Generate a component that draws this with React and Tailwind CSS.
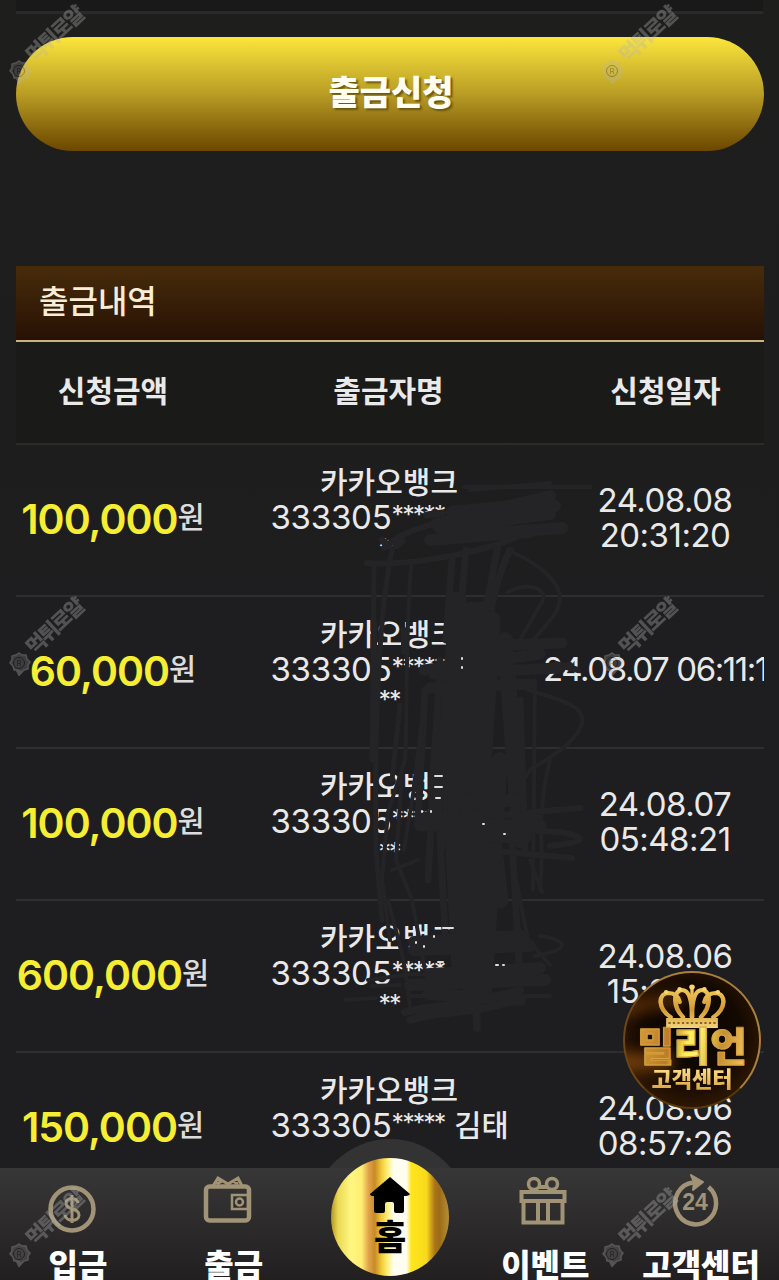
import clsx from 'clsx';

const transactions = [
  { amount: '100,000', stars: '*****', tail: '**', name: '', date: ['24.08.08', '20:31:20'] },
  { amount: '60,000', stars: '*****', tail: '**', name: '', date: ['24.08.07 06:11:1'] },
  { amount: '100,000', stars: '*****', tail: '**', name: '', date: ['24.08.07', '05:48:21'] },
  { amount: '600,000', stars: '*****', tail: '**', name: '', date: ['24.08.06', '15:20:11'] },
  { amount: '150,000', stars: '*****', tail: '', name: '김태', date: ['24.08.06', '08:57:26'] },
];

const watermarks = [
  'left-0 top-0',
  'left-[593px] top-0',
  'left-0 top-[592px]',
  'left-[593px] top-[592px]',
  'left-0 top-[1183px]',
  'left-[593px] top-[1183px]',
];

function Watermark({ className }) {
  return (
    <div className={clsx('absolute h-[92px] w-[92px] text-[#b5b5b5] opacity-35', className)}>
      <svg className="absolute left-[7px] top-[59px]" width="25" height="26" viewBox="0 0 25 26" fill="none" stroke="currentColor">
        <path d="M12 2l3 2 4 0 1 4 3 3-2 3 0 4-4 1-3 3-3-3-4 0-1-4-3-3 2-3 0-4 4-1z" fill="currentColor" fillOpacity=".6" strokeWidth="1.5" />
        <circle cx="12" cy="12" r="5.5" stroke="#222" strokeWidth="1" />
        <path d="M9 19l3 6 4-5" fill="currentColor" />
        <text x="9.500" y="15" fontSize="8" fill="#222" stroke="none" fontFamily="Inter, sans-serif">R</text>
      </svg>
      <span className="absolute left-[14px] top-[23px] w-[82px] -rotate-43 text-center text-[21px] font-black leading-[24px] tracking-[-2px] whitespace-nowrap">
        먹튀로얄
      </span>
    </div>
  );
}

function TransactionRow({ item }) {
  return (
    <div className="grid h-[152px] grid-cols-[194px_1fr_194px] items-center border-b-2 border-[#2e2d2f] pb-[5px]">
      <div className="mt-[3px] flex items-center justify-center whitespace-nowrap">
        <span className="text-[41px] font-semibold leading-none tracking-[-1px] text-[#f6ee32]">{item.amount}</span>
        <span className="-mt-[3px] text-[29.5px] font-medium leading-none text-[#dcdcdc]">원</span>
      </div>
      <div className="mr-[2px] text-center text-[33px] leading-[35px]">
        <p className="h-[35px] text-[30px] font-medium">카카오뱅크</p>
        <p className="ml-[1px] flex h-[35px] justify-center whitespace-nowrap">
          <span className="tracking-[-0.2px]">333305</span>
          <span className="w-[57px] text-left text-[25px] leading-[31px] tracking-[-2px]">{item.stars}</span>
          <span className="w-[60px] text-right text-[29.5px] font-medium leading-[34px]">{item.name}</span>
        </p>
        <p className="h-[35px] text-[25px] leading-[26px] tracking-[-2px]">{item.tail}</p>
      </div>
      <div className="mr-[4px] flex flex-col items-center text-[33px] leading-[35px] tracking-[-0.5px]">
        {item.date.map((line) => (
          <p key={line} className={clsx('whitespace-nowrap', item.date.length === 1 && 'ml-[-20px] tracking-[-1.4px]')}>{line}</p>
        ))}
      </div>
    </div>
  );
}

// Marker strokes hiding the account details
function Scribble() {
  return (
    <svg className="pointer-events-none absolute left-0 top-0" width="779" height="1280" fill="none" stroke="#242326" strokeLinecap="round" strokeLinejoin="round">
      <path d="M436 524L550 496M452 512L550 502M440 528L550 514M446 536L562 528M430 540L530 532M455 520L555 506" strokeWidth="12" />
      <path d="M464 487L590 487M470 490L550 483" strokeWidth="4" />
      <path d="M367 563C400 566 470 556 515 538M384 548C400 532 430 524 446 522M384 548L400 536" strokeWidth="6" />
      <path d="M374 566L372 760M392 550C380 610 374 700 376 850L382 920" strokeWidth="5" />
      <path d="M411 566C405 640 408 700 405 760L388 812L382 880L390 940" strokeWidth="4" />
      <path d="M452 560L446 640M466 550L452 700M498 545L480 640M510 550C495 580 488 620 486 650" strokeWidth="7" />
      <path d="M512 552C550 570 568 590 556 612C545 630 530 640 520 655M508 592C530 580 552 590 540 605L520 640" strokeWidth="4" />
      <path d="M458 600L442 800M472 610L456 830M480 610L466 900M492 620L478 850M470 640L500 900" strokeWidth="17" />
      <path d="M450 780L460 980M468 800L470 1000M484 800L484 990M500 760L486 960M505 640L520 840" strokeWidth="16" />
      <path d="M425 690L418 820M440 660L428 880M436 760L446 950M520 700L525 850M512 840L520 980" strokeWidth="7" />
      <path d="M424 670L540 654M434 674L560 668M500 645L562 643M430 688L530 684" strokeWidth="11" />
      <path d="M528 690C560 700 586 705 582 724C575 745 545 760 530 770L510 800M535 680L533 890M550 760C535 820 545 850 540 890" strokeWidth="4" />
      <path d="M440 820L580 808M450 828L560 832C590 838 585 842 550 846M440 846L572 858M470 812L540 818" strokeWidth="6" />
      <path d="M420 825L540 826M445 835L525 837M448 803L520 800M425 818L455 816" strokeWidth="13" />
      <path d="M402 775L396 860L412 900L425 970M417 770L404 850M432 770L430 840M447 775L440 880" strokeWidth="4" />
      <path d="M400 705L392 780M424 708L414 790M437 705L430 800" strokeWidth="5" />
      <path d="M392 870L418 860M388 900C398 940 406 960 410 1010M530 860L542 892M516 880L530 950" strokeWidth="4" />
      <path d="M414 942L520 936M414 950L530 946M430 974L540 968M410 985L545 980M428 994L520 1000" strokeWidth="12" />
      <path d="M368 980L412 974L540 978M345 1000L376 998M410 996L550 996M372 986L400 985M540 936C570 940 570 950 535 956M520 930L550 965" strokeWidth="4" />
      <path d="M405 1012C430 1005 460 1008 520 990M410 1020C440 1010 470 1015 515 1000M476 990L477 1028" strokeWidth="8" />
      <path d="M374 622L374 690M546 666L570 665M556 664L578 670M404 630L404 652" strokeWidth="6" />
      <path d="M427 515L442 513M382 540L388 546M396 546L402 541" strokeWidth="7" />
      <g stroke="#dedede" strokeWidth="2">
        <path d="M462 658v1M462 667v1M483 824h1M504 834h1M496 965h2M503 965h1M443 928h10M438 962h5M434 936v1M416 942v1M424 946v1" />
        <path d="M435 776h7M435 787h7M436 798h4M422 811v1M431 811v1M430 661h1" />
      </g>
    </svg>
  );
}

function Crown() {
  return (
    <svg width="72" height="48" viewBox="2 0 64 48" preserveAspectRatio="none" fill="none">
      <defs>
        <linearGradient id="crown" x1="0" y1="0" x2="0" y2="48" gradientUnits="userSpaceOnUse">
          <stop stopColor="#f7d568" />
          <stop offset=".55" stopColor="#d39a32" />
          <stop offset="1" stopColor="#f8df87" />
        </linearGradient>
      </defs>
      <g stroke="url(#crown)" strokeWidth="4" strokeLinecap="round">
        <path d="M15 34C4 26 3 11 13 10c6 0 9 4 10 9" />
        <path d="M53 34c11-8 12-23 2-24-6 0-9 4-10 9" />
        <path d="M26 34C17 24 17 8 25 7c7 0 9 12 9 27" />
        <path d="M42 34c9-10 9-26 1-27-7 0-9 12-9 27" />
        <path d="M34 6v27" strokeWidth="3" />
      </g>
      <g fill="#f7d76e">
        <circle cx="34" cy="4" r="2.500" />
        <circle cx="23" cy="6" r="2" />
        <circle cx="45" cy="6" r="2" />
        <circle cx="11" cy="9" r="2" />
        <circle cx="57" cy="9" r="2" />
      </g>
      <path d="M11 35h46v10H11z" fill="url(#crown)" />
      <path d="M13 40h42" stroke="#6a4210" strokeWidth="1.500" strokeDasharray="2 2" />
    </svg>
  );
}

function SupportBadge() {
  return (
    <div className="absolute left-[623px] top-[971px] flex h-[138px] w-[138px] flex-col items-center overflow-hidden rounded-full border-2 border-[#a9803c] border-b-[#5a3908] border-l-[#6d4714] bg-[radial-gradient(circle_at_50%_45%,#080401_0%,#140901_50%,#351b04_80%,#7b5118_100%)] pt-[10px]">
      <div className="absolute left-[-20px] top-[24px] h-[16px] w-[80px] -rotate-12 bg-[#7a3d08] opacity-50 blur-[6px]" />
      <div className="absolute left-[-12px] top-[80px] h-[18px] w-[60px] bg-[#a55a10] opacity-60 blur-[7px]" />
      <div className="relative h-[45px]"><Crown /></div>
      <p className="relative h-[38px] bg-[linear-gradient(100deg,#d99b36_0%,#b97c28_30%,#ffef55_45%,#fff06a_55%,#c78d31_75%,#f3c961_100%)] bg-clip-text text-[39.5px] font-black leading-[38px] whitespace-nowrap text-transparent [-webkit-text-stroke:1px_#d6a23e]">
        밀리언
      </p>
      <p className="relative mt-[1px] bg-linear-to-b from-[#ffe389] to-[#d8a23f] bg-clip-text text-[22px] font-black leading-[24px] whitespace-nowrap text-transparent">
        고객센터
      </p>
    </div>
  );
}

function NavItem({ label, children }) {
  return (
    <div className="flex flex-col items-center">
      <div className="h-[81px] w-full">{children}</div>
      <span className="text-[32px] font-black leading-[34px] whitespace-nowrap text-white">{label}</span>
    </div>
  );
}

function BottomNav() {
  return (
    <nav className="absolute bottom-0 left-0 h-[112px] w-full">
      <div className="absolute left-[312px] top-[-29px] h-[29px] w-[156px] overflow-hidden">
        <div className="h-[156px] w-[156px] rounded-full bg-[#343334]" />
      </div>
      <div className="relative grid h-full grid-cols-5 overflow-hidden bg-linear-to-b from-[#383738] to-[#211f20]">
        <NavItem label="입금">
          <svg className="ml-[46px] mt-[15px]" width="52" height="52" viewBox="0 0 52 52" fill="none" stroke="#a19376">
            <circle cx="26" cy="26" r="21.500" strokeWidth="4.500" />
            <path d="M32 20c-1-6-12-6-12 0 0 8 13 4 13 12 0 7-13 7-14 0M26 12v28" strokeWidth="3" />
          </svg>
        </NavItem>
        <NavItem label="출금">
          <svg className="ml-[45px] mt-[6px]" width="52" height="52" viewBox="0 0 52 52" fill="none" stroke="#a19376">
            <rect x="5" y="12.500" width="43" height="34" rx="3.500" strokeWidth="4.500" />
            <path d="M12 12l5-8 10 6 10-6 4 8M16 10l5-3M37 10l-5-3" strokeWidth="3" />
            <rect x="31" y="21" width="16" height="14" strokeWidth="2.500" />
            <circle cx="38.500" cy="28" r="3.500" strokeWidth="2.500" />
          </svg>
        </NavItem>
        <div />
        <NavItem label="이벤트">
          <svg className="ml-[50px] mt-[8px]" width="52" height="50" viewBox="0 0 52 50" fill="none" stroke="#a19376">
            <circle cx="17" cy="8" r="5.500" strokeWidth="3.500" />
            <circle cx="35" cy="8" r="5.500" strokeWidth="3.500" />
            <path d="M22 11h8" strokeWidth="4" />
            <rect x="4.500" y="16" width="43" height="9" strokeWidth="4" />
            <path d="M6.500 27v19.500h39V27" strokeWidth="4" />
            <path d="M21 26v20M31 26v20" strokeWidth="4" />
          </svg>
        </NavItem>
        <NavItem label="고객센터">
          <svg className="ml-[46px] mt-[4px]" width="52" height="56" viewBox="0 0 52 56" fill="none" stroke="#a19376">
            <path d="M24 10.500A20.500 21 0 1 0 39.500 15" strokeWidth="4.500" />
            <path d="M22 3l12 7-10 8 1-8z" fill="#a19376" strokeWidth="2" strokeLinejoin="round" />
            <text x="26" y="38" textAnchor="middle" fill="#a19376" stroke="none" fontFamily="Liberation Sans, sans-serif" fontSize="23" fontWeight="700">24</text>
          </svg>
        </NavItem>
      </div>
      <div className="absolute left-[331px] top-[-10px] flex h-[118px] w-[118px] flex-col items-center rounded-full bg-[linear-gradient(90deg,#b49423_0%,#ead954_6%,#fff782_17%,#ffed70_26%,#e0a24a_32%,#c78b26_37%,#f2cc3b_43%,#fff07a_48%,#fffef0_53%,#fffdf0_64%,#ffe61b_68%,#f8d91d_81%,#aa7418_88%,#9c6c18_92%,#b78f33_100%)] pt-[17px]">
        <svg width="44" height="40" viewBox="0 0 44 40" fill="#000">
          <path d="M22 2L2 19q0 2 4 2V36q0 2 2 2h7q2 0 2-2v-7q0-2 2-2h5q2 0 2 2v7q0 2 2 2h6q2 0 2-2V21q5 0 6-2z" />
        </svg>
        <span className="text-[35px] font-black leading-[45px] text-black">홈</span>
      </div>
    </nav>
  );
}

export default function App() {
  return (
    <div className="relative h-[1280px] w-[779px] overflow-hidden bg-linear-to-b from-[#1e1e1d] via-[#1e1d1f] to-[#1e1d1f] px-[16px] font-[Inter,'Noto_Sans_CJK_KR',sans-serif] text-[#e9e9ea]">
      <div className="h-[14px] border-b-[3px] border-[#2a2a2a] bg-[#191919]" />

      <button className="mt-[23px] flex h-[114px] w-[748px] items-center justify-center rounded-full bg-linear-to-b from-[#fce63c] via-[#b99d25] to-[#6c4700] pb-[4px] pl-[2px] text-[34px] font-black text-[#fffef0] [text-shadow:2px_2px_2px_#6a5510]">
        출금신청
      </button>

      <section className="mt-[115px] w-[748px] overflow-hidden">
        <h2 className="flex h-[76px] items-center border-b-2 border-[#c9b27c] bg-linear-to-b from-[#472c0b] to-[#271104] pb-[3px] pl-[23px] text-[32px] font-medium text-[#f8ecd8]">
          출금내역
        </h2>
        <div className="grid h-[103px] grid-cols-[194px_1fr_194px] items-center border-b-2 border-[#2b2b2b] bg-[#1a1a19] pb-[3px] text-center text-[30px] font-bold">
          <span>신청금액</span>
          <span className="mr-[3px]">출금자명</span>
          <span className="mr-[3px]">신청일자</span>
        </div>
        {transactions.map((item, i) => (
          <TransactionRow key={i} item={item} />
        ))}
      </section>

      <Scribble />
      <SupportBadge />
      <BottomNav />
      {watermarks.map((position) => (
        <Watermark key={position} className={position} />
      ))}
    </div>
  );
}
